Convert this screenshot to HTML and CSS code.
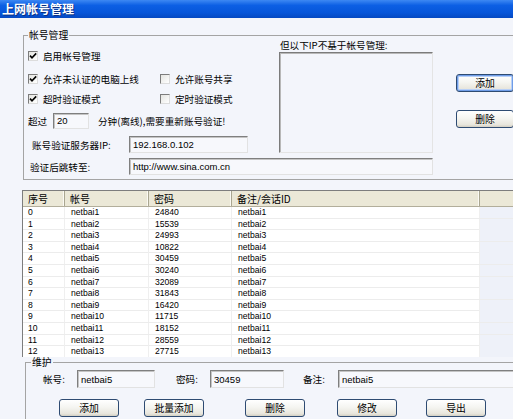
FILE: index.html
```html
<!DOCTYPE html>
<html lang="zh-CN">
<head>
    <meta charset="UTF-8">
    <title>上网帐号管理</title>
    <link rel="stylesheet" href="styles.css">
</head>
<body>
    <div class="window">
        <div class="titlebar">上网帐号管理</div>

        <div class="client">
            <fieldset class="group group-acct">
                <legend>帐号管理</legend>
                <div class="acct-top">
                    <div class="acct-left">
                        <div class="row r1">
                            <label class="chk"><span class="box"><svg viewBox="0 0 8 8" width="8" height="8"><path d="M1 3.6 L3 5.8 L7.2 1.4" /></svg></span>启用帐号管理</label>
                        </div>
                        <div class="row r2">
                            <label class="chk col-a"><span class="box"><svg viewBox="0 0 8 8" width="8" height="8"><path d="M1 3.6 L3 5.8 L7.2 1.4" /></svg></span>允许未认证的电脑上线</label>
                            <label class="chk"><span class="box"></span>允许账号共享</label>
                        </div>
                        <div class="row r3">
                            <label class="chk col-a"><span class="box"><svg viewBox="0 0 8 8" width="8" height="8"><path d="M1 3.6 L3 5.8 L7.2 1.4" /></svg></span>超时验证模式</label>
                            <label class="chk"><span class="box"></span>定时验证模式</label>
                        </div>
                        <div class="row r4">
                            <span class="lbl-over">超过</span>
                            <input class="edit edit-min" type="text" value="20" readonly>
                            <span class="after">分钟(离线),需要重新账号验证!</span>
                        </div>
                        <div class="row r5">
                            <span class="lbl lbl-ip">账号验证服务器IP:</span>
                            <input class="edit edit-ip" type="text" value="192.168.0.102" readonly>
                        </div>
                    </div>

                    <div class="ip-col">
                        <div class="ip-title">但以下IP不基于帐号管理:</div>
                        <div class="listbox"></div>
                    </div>

                    <div class="btn-col">
                        <button class="btn default">添加</button>
                        <button class="btn">删除</button>
                    </div>
                </div>
                <div class="row r6">
                    <span class="lbl lbl-jump">验证后跳转至:</span>
                    <input class="edit edit-url" type="text" value="http://www.sina.com.cn" readonly>
                </div>
            </fieldset>

            <div class="list">
                <div class="lv-head">
                    <div>序号</div><div>帐号</div><div>密码</div><div>备注/会话ID</div><div></div>
                </div>
                <div class="lv-row"><div>0</div><div>netbai1</div><div>24840</div><div>netbai1</div><div></div></div>
                <div class="lv-row"><div>1</div><div>netbai2</div><div>15539</div><div>netbai2</div><div></div></div>
                <div class="lv-row"><div>2</div><div>netbai3</div><div>24993</div><div>netbai3</div><div></div></div>
                <div class="lv-row"><div>3</div><div>netbai4</div><div>10822</div><div>netbai4</div><div></div></div>
                <div class="lv-row"><div>4</div><div>netbai5</div><div>30459</div><div>netbai5</div><div></div></div>
                <div class="lv-row"><div>5</div><div>netbai6</div><div>30240</div><div>netbai6</div><div></div></div>
                <div class="lv-row"><div>6</div><div>netbai7</div><div>32089</div><div>netbai7</div><div></div></div>
                <div class="lv-row"><div>7</div><div>netbai8</div><div>31843</div><div>netbai8</div><div></div></div>
                <div class="lv-row"><div>8</div><div>netbai9</div><div>16420</div><div>netbai9</div><div></div></div>
                <div class="lv-row"><div>9</div><div>netbai10</div><div>11715</div><div>netbai10</div><div></div></div>
                <div class="lv-row"><div>10</div><div>netbai11</div><div>18152</div><div>netbai11</div><div></div></div>
                <div class="lv-row"><div>11</div><div>netbai12</div><div>28559</div><div>netbai12</div><div></div></div>
                <div class="lv-row"><div>12</div><div>netbai13</div><div>27715</div><div>netbai13</div><div></div></div>
            </div>

            <fieldset class="group group-edit">
                <legend>维护</legend>
                <div class="edit-row">
                    <span class="f-lbl">帐号:</span>
                    <input class="edit edit-user" type="text" value="netbai5" readonly>
                    <span class="f-lbl lbl-pass">密码:</span>
                    <input class="edit edit-pass" type="text" value="30459" readonly>
                    <span class="f-lbl lbl-note">备注:</span>
                    <input class="edit edit-note" type="text" value="netbai5" readonly>
                </div>
                <div class="btn-row">
                    <button class="btn">添加</button>
                    <button class="btn">批量添加</button>
                    <button class="btn">删除</button>
                    <button class="btn">修改</button>
                    <button class="btn">导出</button>
                </div>
            </fieldset>
        </div>
    </div>
</body>
</html>
```

FILE: styles.css
```css
body {
    margin: 0;
    background: #f3f5fb;
    font-family: "Noto Sans CJK SC", sans-serif;
    font-size: 9.6px;
    color: #000;
}

.window {
    width: 513px;
    height: 419px;
    overflow: hidden;
}

.titlebar {
    height: 18px;
    padding-left: 2px;
    background: linear-gradient(#3d88f3 0%, #0c5fe4 30%, #0756da 70%, #0549c2 100%);
    color: #fff;
    font-size: 12px;
    font-weight: bold;
    line-height: 18px;
    text-shadow: 1px 1px 0 #0a2f80;
}

.client {
    padding: 12px 0 0 22px;
}

/* group boxes */
.group {
    margin: 0;
    border: 1px solid #a4a4a4;
    min-width: 0;
}

.group legend {
    padding: 0 1px;
    font-size: 9.8px;
    line-height: 10px;
}

.group-acct {
    margin-left: 1px;
    padding: 0 0 4px 4px;
    width: 520px;
}

.acct-top {
    display: flex;
}

.acct-left {
    width: 251px;
}

.row {
    display: flex;
    align-items: center;
    height: 14px;
    line-height: 12px;
    white-space: nowrap;
}

.r1 { margin-top: 9px; }
.r2 { margin-top: 9px; }
.r3 { margin-top: 6px; }
.r4 { margin-top: 6px; height: 17px; }
.r5 { margin-top: 7px; height: 17px; }
.r6 { margin-top: 5px; height: 17px; }

.chk {
    display: flex;
    align-items: center;
}

.col-a {
    width: 132px;
}

.box {
    width: 10px;
    height: 10px;
    box-sizing: border-box;
    margin-right: 5px;
    border: 1px solid;
    border-color: #7c7c7c #dcdcdc #dcdcdc #7c7c7c;
    background: linear-gradient(135deg, #e4e4e0, #fff);
    display: flex;
}

.box svg path {
    fill: none;
    stroke: #000;
    stroke-width: 1.6;
}

.lbl-over {
    width: 25px;
}

.after {
    margin-left: 9px;
}

.lbl-ip {
    width: 97px;
    padding-left: 4px;
}

.lbl-jump {
    width: 99px;
    padding-left: 2px;
}

/* edit boxes */
.edit {
    box-sizing: border-box;
    margin: 0;
    padding: 0 0 0 3px;
    border: 1px solid;
    border-color: #7f7f7f #e2e2e2 #e2e2e2 #7f7f7f;
    box-shadow: inset 1px 1px 0 #c4c4c4;
    background: #f7f8fc;
    font-family: "Liberation Sans", sans-serif;
    font-size: 9.5px;
    color: #000;
    outline: none;
}

.edit-min { width: 36px; height: 16px; }
.edit-ip { width: 119px; height: 17px; }
.edit-url { width: 304px; height: 17px; }

.ip-col {
    width: 154px;
}

.ip-title {
    height: 10px;
    line-height: 10px;
    padding-left: 1px;
    white-space: nowrap;
}

.listbox {
    margin-top: 2px;
    height: 101px;
    box-sizing: border-box;
    border: 1px solid;
    border-color: #7b7b7b #e4e4e4 #e4e4e4 #7b7b7b;
    box-shadow: inset 1px 1px 0 #b8b8b8;
}

.btn-col {
    margin-left: 23px;
    display: flex;
    flex-direction: column;
}

.btn-col .btn {
    width: 58px;
    margin-top: 18px;
}

.btn-col .btn:first-child {
    margin-top: 34px;
}

/* buttons */
.btn {
    width: 60px;
    height: 18px;
    box-sizing: border-box;
    padding: 0;
    border: 1px solid #2e4b72;
    border-radius: 3px;
    background: linear-gradient(#ffffff 0%, #f5f5f1 45%, #e8e6dd 85%, #d3cfc2 100%);
    font-family: inherit;
    font-size: 9.8px;
    line-height: 16px;
    color: #000;
}

.btn.default {
    box-shadow: inset 0 0 0 1px #6f9de8, inset 0 0 0 2px #b9d0f6;
}

/* list view */
.list {
    margin-top: 10px;
    width: 500px;
    height: 167px;
    box-sizing: border-box;
    overflow: hidden;
    border-left: 1px solid #7d7d7d;
    border-top: 1px solid #7d7d7d;
    background: #fff;
}

.lv-head,
.lv-row {
    display: grid;
    grid-template-columns: 42px 84px 83px 248px 1fr;
}

.lv-head {
    height: 16px;
    box-sizing: border-box;
    background: #ebe8d7;
    border-bottom: 1px solid #b2ae9b;
    font-size: 10px;
    line-height: 15px;
}

.lv-head div {
    padding-left: 5px;
    border-right: 1px solid #a9a691;
    box-shadow: inset -1px 0 0 #fbfaf4;
    white-space: nowrap;
}

.lv-row {
    height: 11.6px;
    box-sizing: border-box;
    border-bottom: 1px solid #ececec;
    font-family: "Liberation Sans", sans-serif;
    font-size: 8.6px;
    line-height: 11px;
}

.lv-row div {
    padding-left: 5px;
    border-right: 1px solid #efefef;
}

.lv-row div:nth-child(2),
.lv-row div:nth-child(3),
.lv-row div:nth-child(4) {
    padding-left: 6px;
}

.lv-row div:last-child {
    background: #eef1f9;
}

/* maintenance group */
.group-edit {
    margin-left: 3px;
    padding: 0 0 10px 5px;
    width: 500px;
}

.edit-row {
    display: flex;
    align-items: center;
    height: 18px;
    margin-top: 3px;
    padding-left: 12px;
    white-space: nowrap;
}

.f-lbl {
    width: 34px;
}

.lbl-pass { margin-left: 21px; }
.lbl-note { margin-left: 19px; width: 35px; }

.edit-user { width: 78px; height: 18px; }
.edit-pass { width: 74px; height: 18px; }
.edit-note { width: 180px; height: 18px; }

.btn-row {
    display: grid;
    grid-template-columns: 85px 101px 92px 89px 60px;
    margin-top: 11px;
    padding-left: 28px;
}
```
